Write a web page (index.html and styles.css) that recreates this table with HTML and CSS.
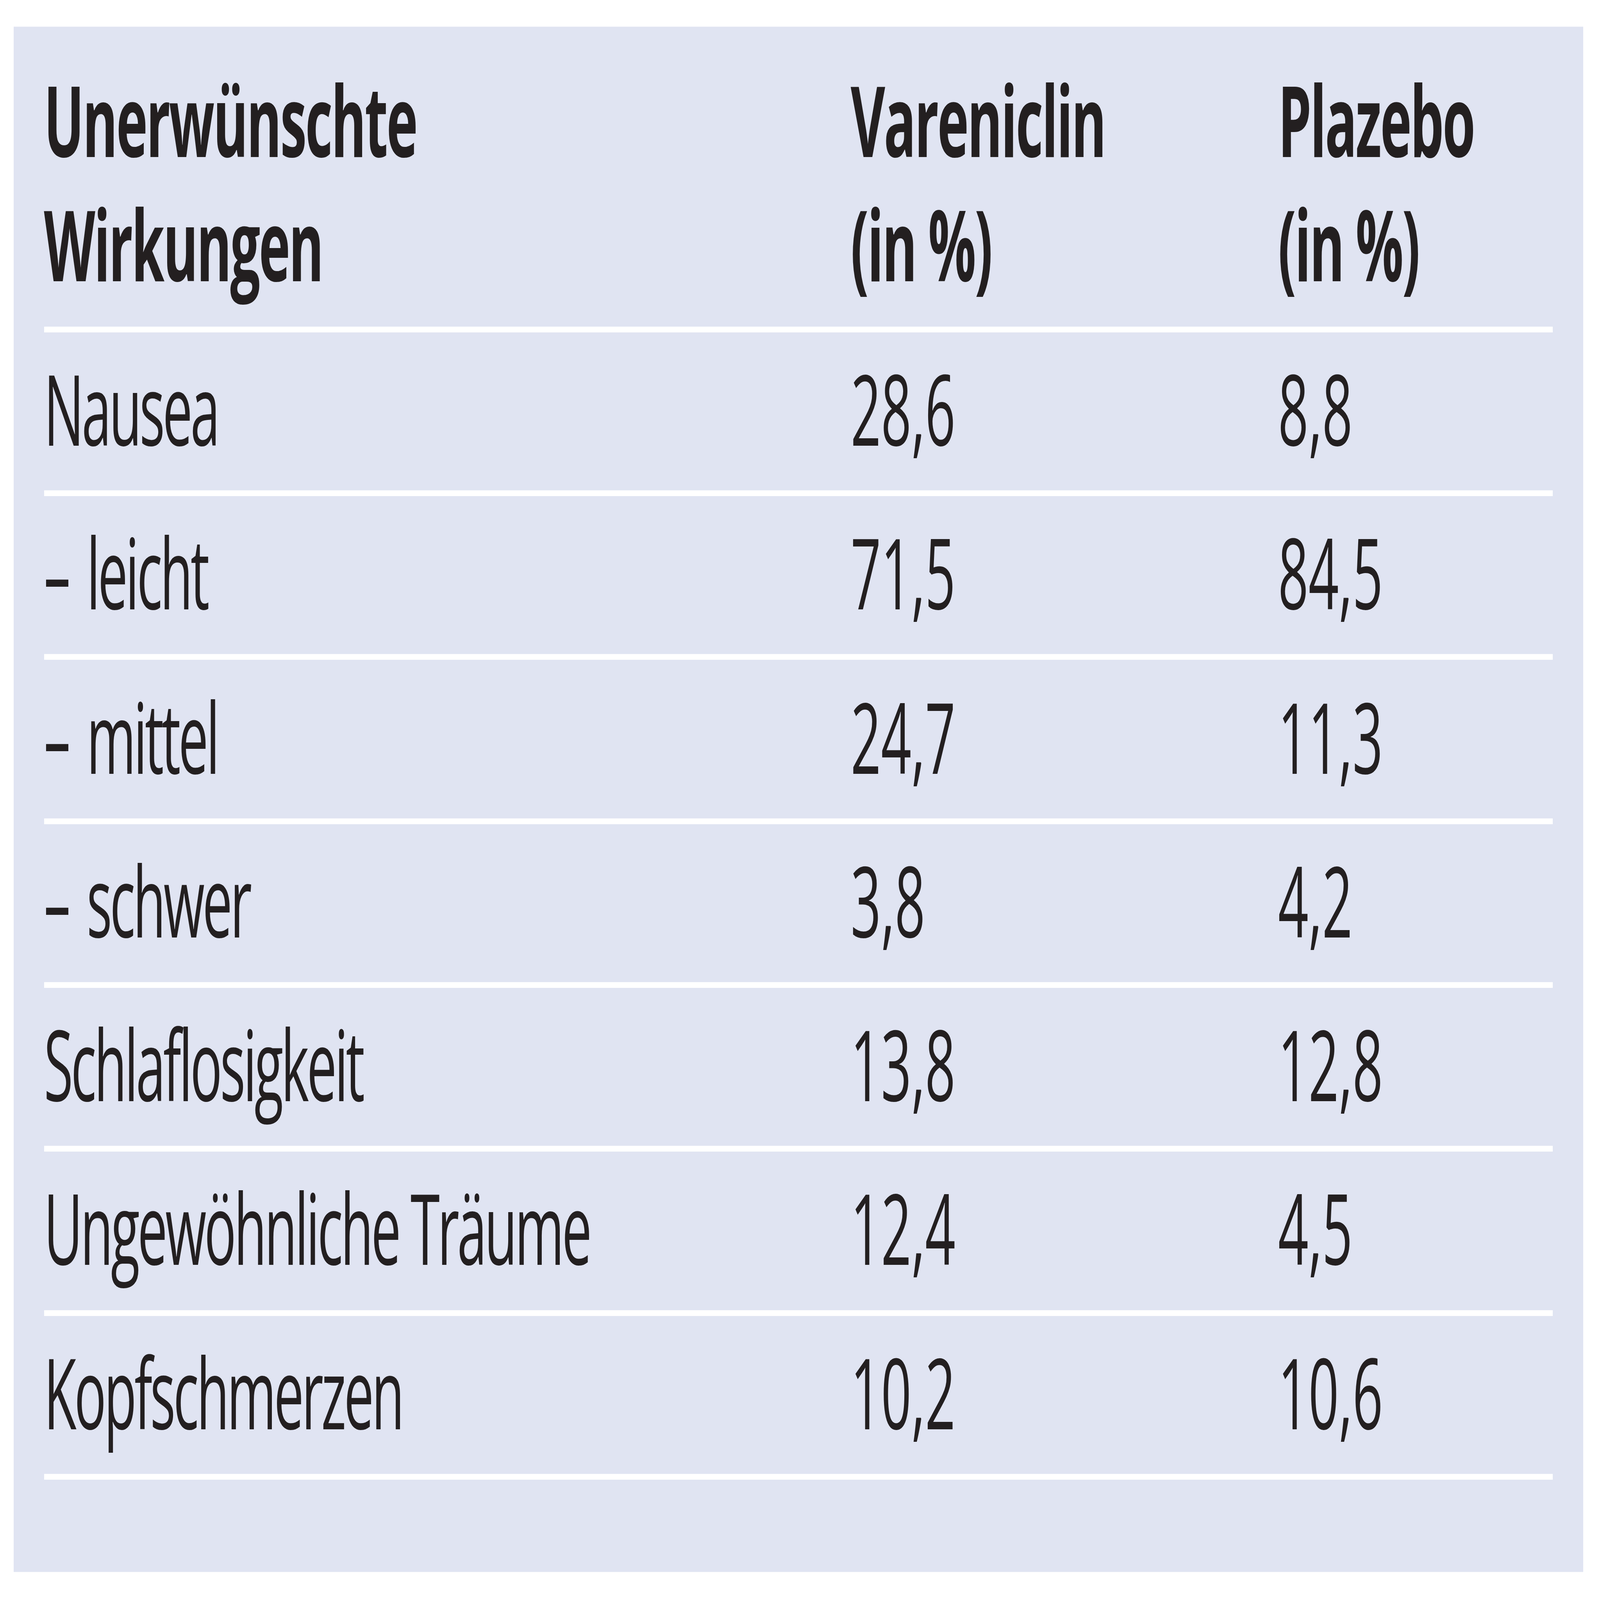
FILE: index.html
```html
<!DOCTYPE html>
<html lang="de">
<head>
<meta charset="utf-8">
<title>Unerwünschte Wirkungen</title>
<link rel="stylesheet" href="styles.css">
</head>
<body>
<div class="frame">
  <div class="stage" id="stage">
    <div class="panel">
      <table class="tbl">
        <colgroup>
          <col class="c1"><col class="c2"><col class="c3">
        </colgroup>
        <thead>
          <tr>
            <th>Unerwünschte<br>Wirkungen</th>
            <th>Vareniclin<br>(in %)</th>
            <th>Plazebo<br>(in %)</th>
          </tr>
        </thead>
        <tbody>
          <tr><td>Nausea</td><td class="num">28,6</td><td class="num">8,8</td></tr>
          <tr><td><span class="dash">–</span>leicht</td><td class="num">71,5</td><td class="num">84,5</td></tr>
          <tr><td><span class="dash">–</span>mittel</td><td class="num">24,7</td><td class="num">11,3</td></tr>
          <tr><td><span class="dash">–</span>schwer</td><td class="num">3,8</td><td class="num">4,2</td></tr>
          <tr><td>Schlaflosigkeit</td><td class="num">13,8</td><td class="num">12,8</td></tr>
          <tr><td>Ungewöhnliche Träume</td><td class="num">12,4</td><td class="num">4,5</td></tr>
          <tr><td>Kopfschmerzen</td><td class="num">10,2</td><td class="num">10,6</td></tr>
        </tbody>
      </table>
    </div>
  </div>
</div>
<script src="app.js"></script>
</body>
</html>
```

FILE: styles.css
```css
html, body {
  margin: 0;
  padding: 0;
  height: 100%;
  background: #ffffff;
  overflow: hidden;
}
.frame {
  width: 100vw;
  height: 100vh;
  overflow: hidden;
  background: #ffffff;
}
.stage {
  width: 7899px;
  height: 4279px;
  padding: 72px 0 0 68px;
  box-sizing: border-box;
  transform-origin: 0 0;
  font-family: "Open Sans", "Noto Sans", "DejaVu Sans", sans-serif;
  color: #231f20;
}
.panel {
  width: 7748px;
  height: 4132px;
  box-sizing: border-box;
  background: #e0e4f2;
  padding: 82px 150px 0 149px;
}
.tbl {
  width: 100%;
  border-collapse: collapse;
  border-spacing: 0;
  table-layout: fixed;
}
.c1 { width: 3983px; }
.c2 { width: 2110px; }
.c3 { width: auto; }
.tbl th,
.tbl td {
  padding: 0;
  text-align: left;
  vertical-align: top;
  font-size: 262px;
  line-height: 332px;
  border-bottom: 17px solid #ffffff;
  white-space: nowrap;
}
.tbl th {
  font-weight: 700;
  letter-spacing: -0.025em;
  padding-bottom: 55px;
}
.tbl td {
  font-weight: 400;
  letter-spacing: -0.04em;
  padding-top: 37px;
  padding-bottom: 54px;
}
.tbl td.num {
  letter-spacing: 0;
}
.dash {
  display: inline-block;
  letter-spacing: 0;
  margin-right: 80px;
}
```

FILE: app.js
```js
(function () {
  var stage = document.getElementById('stage');
  function fit() {
    var sx = window.innerWidth / 7899;
    var sy = window.innerHeight / 4279;
    stage.style.zoom = sx;
    stage.style.transform = 'scaleY(' + (sy / sx) + ')';
  }
  fit();
  window.addEventListener('resize', fit);
})();
```
